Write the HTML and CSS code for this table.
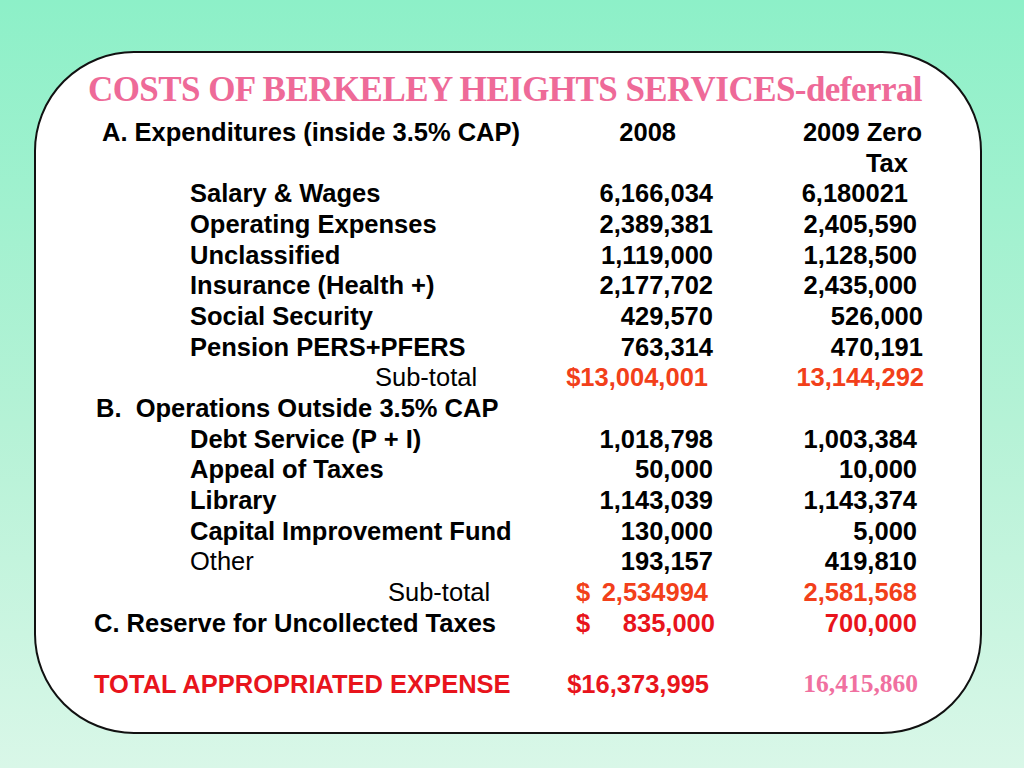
FILE: index.html
```html
<!DOCTYPE html>
<html>
<head>
<meta charset="utf-8">
<link rel="stylesheet" href="styles.css">
</head>
<body>
<div class="card">
  <h1 class="title">COSTS OF BERKELEY HEIGHTS SERVICES-deferral</h1>
  <div class="table">
    <div class="row"><span class="label pl8">A. Expenditures (inside 3.5% CAP)</span><span class="c1 pr39">2008</span><span class="c2 pr2">2009 Zero</span></div>
    <div class="row"><span class="label"></span><span class="c1"></span><span class="c2 pr16">Tax</span></div>
    <div class="row"><span class="label item">Salary &amp; Wages</span><span class="c1">6,166,034</span><span class="c2 pr16">6,180021</span></div>
    <div class="row"><span class="label item">Operating Expenses</span><span class="c1">2,389,381</span><span class="c2">2,405,590</span></div>
    <div class="row"><span class="label item">Unclassified</span><span class="c1">1,119,000</span><span class="c2">1,128,500</span></div>
    <div class="row"><span class="label item">Insurance (Health +)</span><span class="c1">2,177,702</span><span class="c2">2,435,000</span></div>
    <div class="row"><span class="label item">Social Security</span><span class="c1">429,570</span><span class="c2 pr1">526,000</span></div>
    <div class="row"><span class="label item">Pension PERS+PFERS</span><span class="c1">763,314</span><span class="c2 pr1">470,191</span></div>
    <div class="row"><span class="label sub1 regular">Sub-total</span><span class="c1 orange pr7">$13,004,001</span><span class="c2 orange pr0">13,144,292</span></div>
    <div class="row"><span class="label pl2 pre">B.  Operations Outside 3.5% CAP</span><span class="c1"></span><span class="c2"></span></div>
    <div class="row"><span class="label item">Debt Service (P + I)</span><span class="c1">1,018,798</span><span class="c2">1,003,384</span></div>
    <div class="row"><span class="label item">Appeal of Taxes</span><span class="c1">50,000</span><span class="c2">10,000</span></div>
    <div class="row"><span class="label item">Library</span><span class="c1">1,143,039</span><span class="c2">1,143,374</span></div>
    <div class="row"><span class="label item">Capital Improvement Fund</span><span class="c1">130,000</span><span class="c2">5,000</span></div>
    <div class="row"><span class="label item regular">Other</span><span class="c1">193,157</span><span class="c2">419,810</span></div>
    <div class="row"><span class="label sub2 regular">Sub-total</span><span class="c1 split orange pr7"><span>$</span><span>2,534994</span></span><span class="c2 orange">2,581,568</span></div>
    <div class="row"><span class="label">C. Reserve for Uncollected Taxes</span><span class="c1 split red pr0"><span>$</span><span>835,000</span></span><span class="c2 red">700,000</span></div>
    <div class="row"><span class="label">&nbsp;</span><span class="c1"></span><span class="c2"></span></div>
    <div class="row"><span class="label red">TOTAL APPROPRIATED EXPENSE</span><span class="c1 red pr6">$16,373,995</span><span class="c2 pink pr6">16,415,860</span></div>
  </div>
</div>
</body>
</html>
```

FILE: styles.css
```css
html, body {
  margin: 0;
  padding: 0;
}
body {
  width: 1024px;
  height: 768px;
  overflow: hidden;
  background: linear-gradient(to bottom, #8df0c8 0%, #b5f2d6 55%, #d9f7e8 100%);
  font-family: "Liberation Sans", Arial, sans-serif;
}
.card {
  box-sizing: border-box;
  width: 948px;
  height: 683px;
  margin: 51px 0 0 34px;
  border: 2px solid #111;
  border-radius: 100px;
  background: #fff;
  padding: 17px 0 0 58px;
}
.title {
  margin: 0 0 7px -58px;
  padding-right: 6px;
  font-family: "Liberation Serif", "Times New Roman", serif;
  font-weight: bold;
  font-size: 35px;
  letter-spacing: -0.55px;
  line-height: 40px;
  height: 40px;
  color: #ee6a98;
  text-align: center;
  white-space: nowrap;
}
.table {
  width: 830px;
  font-size: 25.5px;
  font-weight: bold;
  line-height: 30.67px;
  color: #000;
}
.row {
  display: flex;
  height: 30.67px;
  white-space: nowrap;
}
.label {
  width: 472px;
  flex: none;
}
.c1 {
  width: 149px;
  flex: none;
  text-align: right;
  box-sizing: border-box;
  padding-right: 2px;
}
.c2 {
  width: 209px;
  flex: none;
  text-align: right;
  box-sizing: border-box;
  padding-right: 7px;
}
.split {
  display: flex;
  justify-content: space-between;
  padding-left: 10px;
}
.item { padding-left: 96px; box-sizing: border-box; }
.pl8 { padding-left: 8px; box-sizing: border-box; }
.pl2 { padding-left: 2px; box-sizing: border-box; }
.sub1 { padding-left: 281px; box-sizing: border-box; }
.sub2 { padding-left: 294px; box-sizing: border-box; }
.pre { white-space: pre; }
.regular { font-weight: normal; }
.pr0 { padding-right: 0; }
.pr1 { padding-right: 1px; }
.pr2 { padding-right: 2px; }
.pr6 { padding-right: 6px; }
.pr7 { padding-right: 7px; }
.pr16 { padding-right: 16px; }
.pr39 { padding-right: 39px; }
.orange { color: #f2401a; }
.red { color: #e8141c; }
.pink {
  color: #f070a0;
  font-family: "Liberation Serif", "Times New Roman", serif;
  font-size: 25.5px;
}
```
